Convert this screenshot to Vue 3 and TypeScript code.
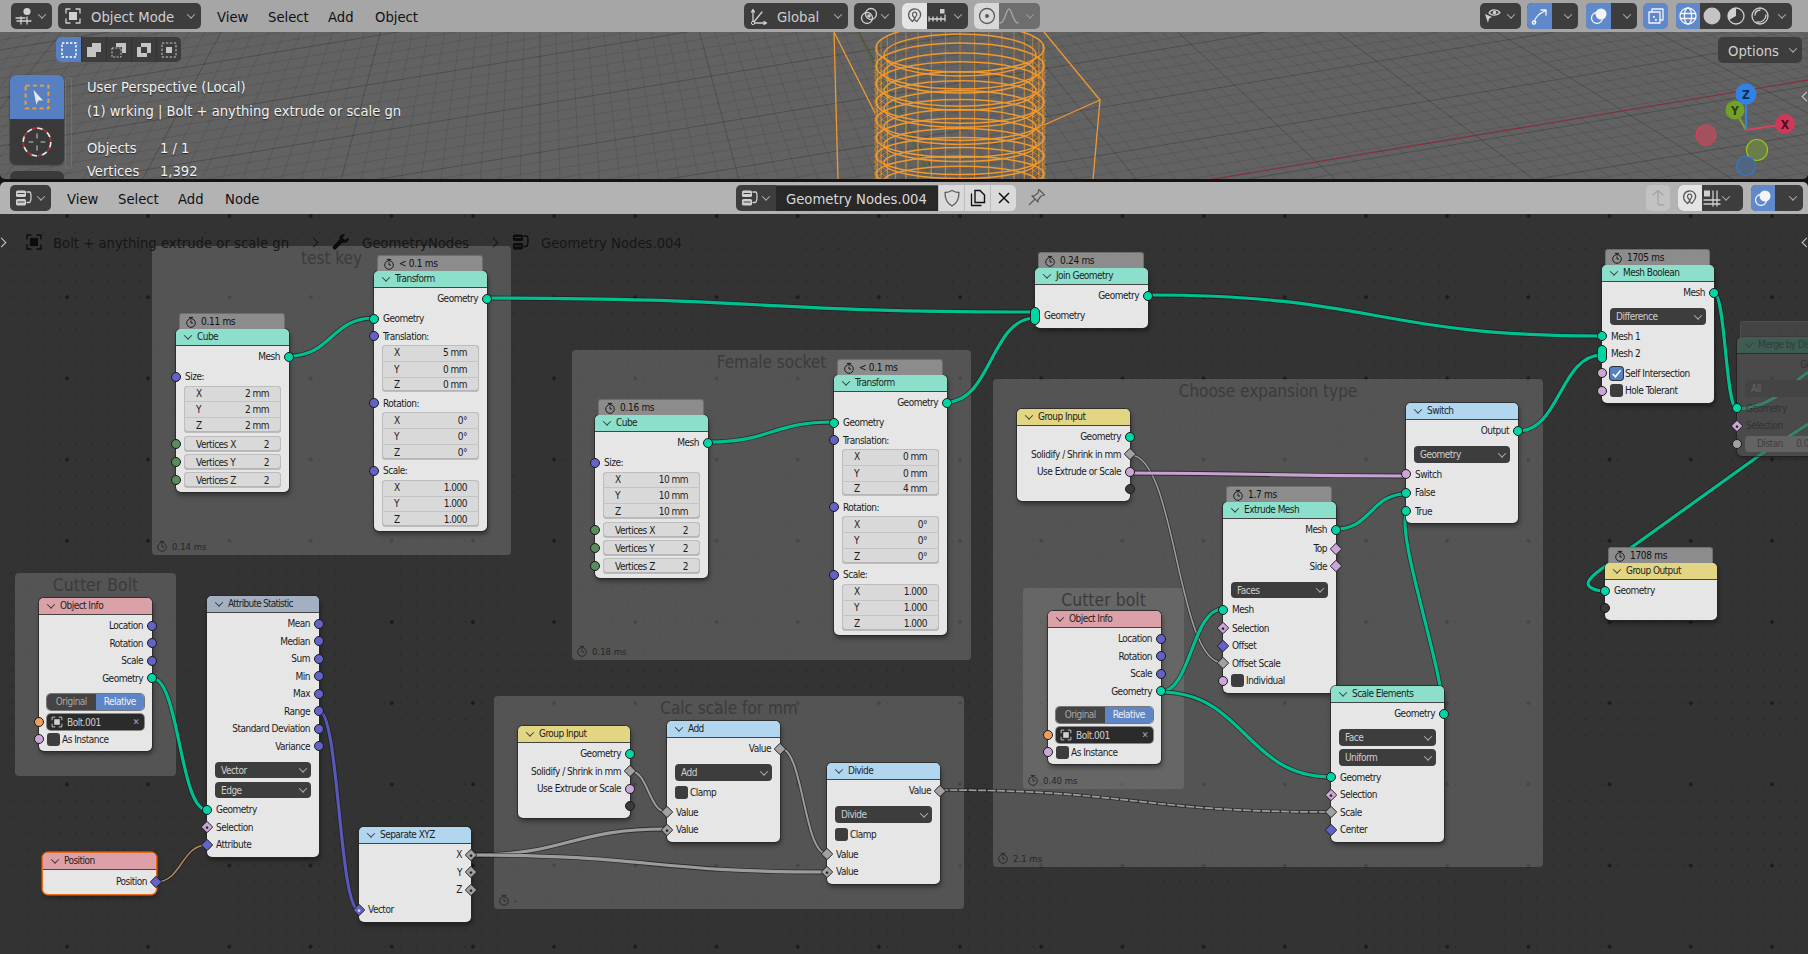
<template>
  <div class="app">
    <section class="area top">
      <header class="bar">
        <div class="btn ed"><svg class="ic" viewBox="0 0 20 20" v-html="icons.view3d"></svg><i class="chev"></i></div>
        <div class="btn mode"><svg class="ic" viewBox="0 0 20 20" v-html="icons.object"></svg><span>Object Mode</span><i class="chev"></i></div>
        <nav class="menu"><span>View</span><span>Select</span><span>Add</span><span>Object</span></nav>
        <div class="btn global"><svg class="ic" viewBox="0 0 20 20" v-html="icons.axes"></svg><span>Global</span><i class="chev"></i></div>
        <div class="btn pivot"><svg class="ic" viewBox="0 0 20 20" v-html="icons.rings"></svg><i class="chev"></i></div>
        <div class="btn snapg"><b class="lit"><svg class="ic dark" viewBox="0 0 20 20" v-html="icons.magnet"></svg></b><svg class="ic" viewBox="0 0 20 20" v-html="icons.increment"></svg><i class="chev"></i></div>
        <div class="btn prop"><b class="lit"><svg class="ic dark" viewBox="0 0 20 20" v-html="icons.target"></svg></b><svg class="ic" viewBox="0 0 20 20" v-html="icons.falloff"></svg><i class="chev"></i></div>
        <div class="btn eye"><svg class="ic" viewBox="0 0 20 20" v-html="icons.eye"></svg><i class="chev"></i></div>
        <div class="btn gz"><b class="blue"><svg class="ic" viewBox="0 0 20 20" v-html="icons.gizmo"></svg></b><i class="chev"></i></div>
        <div class="btn ov"><b class="blue"><svg class="ic" viewBox="0 0 20 20" v-html="icons.overlay"></svg></b><i class="chev"></i></div>
        <div class="btn xr"><b class="blue"><svg class="ic" viewBox="0 0 20 20" v-html="icons.xray"></svg></b></div>
        <div class="btn sh">
          <b class="blue"><svg class="ic" viewBox="0 0 20 20" v-html="icons.wire"></svg></b>
          <b><svg class="ic" viewBox="0 0 20 20" v-html="icons.solid"></svg></b>
          <b><svg class="ic" viewBox="0 0 20 20" v-html="icons.matcap"></svg></b>
          <b><svg class="ic" viewBox="0 0 20 20" v-html="icons.render"></svg></b>
          <i class="chev"></i>
        </div>
      </header>
      <div class="viewport">
        <svg class="scene" viewBox="0 32 1808 148">
          <path :d="grid.minor" class="gmin" />
          <path :d="grid.major" class="gmaj" />
          <path d="M1208 180L1808 80" class="xaxis" />
          <path d="M858 32L932 180" class="yaxis" />
          <g class="bolt">
            <path d="M834 32L838 180M834 32L875 113M1044 32L1100 100L1093 180M1044 125L1100 100" class="box-line" />
            <path v-for="(p, i) in bolt.mesh" :key="'m' + i" :d="p" class="mesh" />
            <path v-for="(p, i) in bolt.rings" :key="'r' + i" :d="p" class="ring" />
          </g>
          <g class="gizmo">
            <circle cx="1706" cy="135" r="10" fill="#a3525c" stroke="#d8405c" stroke-width="1.2" />
            <circle cx="1757" cy="150" r="10.5" fill="#6c7d4c" stroke="#8fcc14" stroke-width="1.2" />
            <circle cx="1746" cy="166" r="9.5" fill="#50657f" stroke="#3377cc" stroke-width="1.2" />
            <path d="M1746 130L1785 124" stroke="#d8405c" stroke-width="2" />
            <path d="M1746 130L1735 110" stroke="#7ea32c" stroke-width="2" />
            <path d="M1746 130V94" stroke="#2f83e0" stroke-width="2" />
            <circle cx="1735" cy="110" r="9.5" fill="#72a028" />
            <circle cx="1746" cy="94" r="10.5" fill="#2f83e6" />
            <circle cx="1785" cy="124" r="10" fill="#d0385a" />
            <text x="1735" y="114.5" fill="#2c3e0c">Y</text>
            <text x="1746" y="98.5" fill="#0d2c55">Z</text>
            <text x="1785" y="128.5" fill="#4a0d1c">X</text>
          </g>
        </svg>
        <div class="selmodes">
          <b v-for="(s, i) in selIcons" :key="i" :class="{ on: i === 0 }"><svg viewBox="0 0 20 20" v-html="s"></svg></b>
        </div>
        <div class="tools">
          <b class="on"><svg viewBox="0 0 30 30" v-html="icons.selectBox"></svg></b>
          <b><svg viewBox="0 0 30 30" v-html="icons.cursor"></svg></b>
        </div>
        <div class="tool3"></div>
        <div class="toolscroll"></div>
        <div class="stats">
          <p>User Perspective (Local)</p>
          <p>(1) wrking | Bolt + anything extrude or scale gn</p>
          <dl><dt>Objects</dt><dd>1 / 1</dd></dl>
          <dl><dt>Vertices</dt><dd>1,392</dd></dl>
        </div>
        <div class="options"><span>Options</span><i class="chev"></i></div>
        <div class="edgearrow a1"></div>
      </div>
    </section>

    <section class="area bottom">
      <header class="bar light">
        <div class="btn ed ed2"><svg class="ic" viewBox="0 0 20 20" v-html="icons.nodes"></svg><i class="chev"></i></div>
        <nav class="menu"><span>View</span><span>Select</span><span>Add</span><span>Node</span></nav>
        <div class="btn nt"><svg class="ic" viewBox="0 0 20 20" v-html="icons.nodes"></svg><i class="chev"></i></div>
        <div class="name">Geometry Nodes.004</div>
        <div class="lits">
          <b><svg class="ic dark" viewBox="0 0 20 20" v-html="icons.shield"></svg></b>
          <b><svg class="ic black" viewBox="0 0 20 20" v-html="icons.copy"></svg></b>
          <b><svg class="ic black" viewBox="0 0 20 20" v-html="icons.close"></svg></b>
        </div>
        <div class="pin"><svg class="ic dark" viewBox="0 0 20 20" v-html="icons.pin"></svg></div>
        <div class="up"><svg class="ic" viewBox="0 0 20 20" v-html="icons.up"></svg></div>
        <div class="btn snap2"><b class="lit"><svg class="ic dark" viewBox="0 0 20 20" v-html="icons.magnet"></svg></b><svg class="ic" viewBox="0 0 20 20" v-html="icons.snapgrid"></svg><i class="chev"></i></div>
        <div class="btn ov2"><b class="blue"><svg class="ic" viewBox="0 0 20 20" v-html="icons.overlay"></svg></b><i class="chev"></i></div>
      </header>
      <div class="canvas">
        <div
          v-for="f in frames"
          :key="f.label + f.x"
          class="frame"
          :class="f.big ? 'big' : ''"
          :style="{ left: f.x + 'px', top: f.y - 214 + 'px', width: f.w + 'px', height: f.h + 'px' }"
        >
          <div class="frame-label">{{ f.label }}</div>
          <div v-if="f.time" class="frame-time"><svg class="watch" viewBox="0 0 12 12" v-html="icons.watch"></svg>{{ f.time }}</div>
        </div>

        <svg class="wires" viewBox="0 214 1808 740">
          <g v-for="(l, i) in links" :key="i">
            <path :d="l.d" class="wire-bg" :stroke-width="l.t + 1.6" />
            <path :d="l.d" class="wire" :stroke="l.c" :stroke-width="l.t" :stroke-dasharray="l.dash" />
          </g>
        </svg>

        <div
          v-for="n in nodes"
          :key="n.title + n.x"
          class="node"
          :class="[n.muted ? 'muted' : '', n.active ? 'active' : '']"
          :style="{ left: n.x + 'px', top: n.y - 214 + 'px', width: n.w + 'px' }"
        >
          <div v-if="n.time" class="timer"><svg class="watch" viewBox="0 0 12 12" v-html="icons.watch"></svg>{{ n.time }}</div>
          <div class="head" :class="n.c"><i class="chev"></i>{{ n.title }}</div>
          <div class="body">
            <template v-for="(r, i) in n.rows" :key="i">
              <div v-if="r.k === 'vec'" class="vec">
                <div v-for="v in r.vals" :key="v[0]" class="vrow"><span>{{ v[0] }}</span><span>{{ v[1] }}</span></div>
              </div>
              <div v-else-if="r.k === 'dd'" class="dd"><div class="dd-in"><span>{{ r.label }}</span><i class="chev"></i></div></div>
              <div v-else-if="r.k === 'toggle'" class="toggle"><div class="tg"><span>Original</span><span class="on">Relative</span></div></div>
              <div v-else class="row" :class="r.k" :style="r.mt ? { marginTop: r.mt + 'px' } : undefined">
                <i v-if="r.s" class="sock" :class="sockClass(r)"></i>
                <template v-if="r.k === 'num'">
                  <div class="numbox"><span>{{ r.label }}</span><span>{{ r.val }}</span></div>
                </template>
                <template v-else-if="r.k === 'chk'">
                  <i class="box" :class="{ on: r.on }"><svg v-if="r.on" viewBox="0 0 12 12"><path d="M2.5 6.5L5 9L9.8 3" /></svg></i>{{ r.label }}
                </template>
                <template v-else-if="r.k === 'obj'">
                  <div class="objbox"><svg class="ic" viewBox="0 0 20 20" v-html="icons.object"></svg><span>{{ r.label }}</span><em>✕</em></div>
                </template>
                <template v-else>{{ r.label }}</template>
              </div>
            </template>
          </div>
        </div>

        <div class="crumbs">
          <svg class="ic k" viewBox="0 0 20 20" v-html="icons.object"></svg>
          <span class="c1">Bolt + anything extrude or scale gn</span>
          <i class="sep"></i>
          <svg class="ic k" viewBox="0 0 20 20" v-html="icons.wrench"></svg>
          <span class="c2">GeometryNodes</span>
          <i class="sep"></i>
          <svg class="ic k" viewBox="0 0 20 20" v-html="icons.nodesK"></svg>
          <span class="c3">Geometry Nodes.004</span>
        </div>
        <div class="edgearrow left"></div>
        <div class="edgearrow a2"></div>
      </div>
    </section>
  </div>
</template>

<script setup lang="ts">
type Row = {
  k: 'out' | 'in' | 'vec' | 'num' | 'dd' | 'chk' | 'toggle' | 'obj'
  label?: string
  s?: string
  mt?: number
  val?: string
  on?: boolean
  vals?: string[][]
}

interface NodeDef {
  x: number
  y: number
  w: number
  title: string
  c: string
  time?: string
  muted?: boolean
  active?: boolean
  rows: Row[]
}

const out = (label: string, s = 'geo', mt = 0): Row => ({ k: 'out', label, s, mt })
const inp = (label: string, s = 'geo', mt = 0): Row => ({ k: 'in', label, s, mt })
const num = (label: string, val: string, s = 'int'): Row => ({ k: 'num', label, val, s })
const dd = (label: string): Row => ({ k: 'dd', label })
const chk = (label: string, s = '', on = false, mt = 0): Row => ({ k: 'chk', label, s, on, mt })
const vec = (a: string, b: string, c: string): Row => ({ k: 'vec', vals: [['X', a], ['Y', b], ['Z', c]] })

const sockClass = (r: Row) => {
  const [c, shape] = (r.s || '').split(':')
  return ['s-' + c, 'sh-' + (shape || 'circle'), r.k === 'out' ? 'right' : 'left']
}

const cube = (x: number, y: number, size: string, time: string): NodeDef => ({
  x, y, w: 113, title: 'Cube', c: 'geo', time,
  rows: [
    out('Mesh'), inp('Size:', 'vec', 2.5), vec(size, size, size),
    num('Vertices X', '2'), num('Vertices Y', '2'), num('Vertices Z', '2'),
  ],
})

const transform = (x: number, y: number, a: string, b: string, c: string): NodeDef => ({
  x, y, w: 113, title: 'Transform', c: 'geo', time: '< 0.1 ms',
  rows: [
    out('Geometry'), inp('Geometry', 'geo', 2.5),
    inp('Translation:', 'vec'), vec(a, b, c),
    inp('Rotation:', 'vec'), vec('0°', '0°', '0°'),
    inp('Scale:', 'vec'), vec('1.000', '1.000', '1.000'),
  ],
})

const objectInfo = (x: number, y: number): NodeDef => ({
  x, y, w: 113, title: 'Object Info', c: 'input',
  rows: [
    out('Location', 'vec'), out('Rotation', 'vec'), out('Scale', 'vec'), out('Geometry'),
    { k: 'toggle' }, { k: 'obj', label: 'Bolt.001', s: 'obj' }, chk('As Instance', 'bool'),
  ],
})

const groupInput = (x: number, y: number, w: number): NodeDef => ({
  x, y, w, title: 'Group Input', c: 'group',
  rows: [out('Geometry'), out('Solidify / Shrink in mm', 'val:dia'), out('Use Extrude or Scale', 'bool'), out('', 'none')],
})

const nodes: NodeDef[] = [
  cube(176, 329, '2 mm', '0.11 ms'),
  transform(374, 271, '5 mm', '0 mm', '0 mm'),
  cube(595, 415, '10 mm', '0.16 ms'),
  transform(834, 375, '0 mm', '0 mm', '4 mm'),
  {
    x: 1035, y: 268, w: 113, title: 'Join Geometry', c: 'geo', time: '0.24 ms',
    rows: [out('Geometry'), inp('Geometry', 'geo:pill', 2.5)],
  },
  {
    x: 1602, y: 265, w: 112, title: 'Mesh Boolean', c: 'geo', time: '1705 ms',
    rows: [out('Mesh'), dd('Difference'), inp('Mesh 1'), inp('Mesh 2', 'geo:pill'), chk('Self Intersection', 'bool', true, 2), chk('Hole Tolerant', 'bool')],
  },
  {
    x: 1737, y: 337, w: 113, title: 'Merge by Distance', c: 'geo', time: '-', muted: true,
    rows: [out('Geometry'), dd('All'), inp('Geometry'), inp('Selection', 'bool:dot'), num('Distan', '0.001 m', 'val')],
  },
  {
    x: 1605, y: 563, w: 112, title: 'Group Output', c: 'group', time: '1708 ms',
    rows: [inp('Geometry'), inp('', 'none')],
  },
  groupInput(1017, 409, 113),
  {
    x: 1406, y: 403, w: 112, title: 'Switch', c: 'conv',
    rows: [out('Output'), dd('Geometry'), inp('Switch', 'bool'), inp('False', 'geo', 1), inp('True', 'geo', 1)],
  },
  {
    x: 1223, y: 502, w: 113, title: 'Extrude Mesh', c: 'geo', time: '1.7 ms',
    rows: [
      out('Mesh'), out('Top', 'bool:dia', 1.5), out('Side', 'bool:dia'), dd('Faces'),
      inp('Mesh'), inp('Selection', 'bool:dot', 1), inp('Offset', 'vec:dia'), inp('Offset Scale', 'val:dia'), chk('Individual', 'bool'),
    ],
  },
  {
    x: 1331, y: 686, w: 113, title: 'Scale Elements', c: 'geo',
    rows: [out('Geometry'), dd('Face'), dd('Uniform'), inp('Geometry'), inp('Selection', 'bool:dot'), inp('Scale', 'val:dia'), inp('Center', 'vec:dia')],
  },
  objectInfo(1048, 611),
  objectInfo(39, 598),
  {
    x: 207, y: 596, w: 112, title: 'Attribute Statistic', c: 'attr',
    rows: [
      out('Mean', 'vec'), out('Median', 'vec'), out('Sum', 'vec'), out('Min', 'vec'), out('Max', 'vec'), out('Range', 'vec'),
      out('Standard Deviation', 'vec'), out('Variance', 'vec'), dd('Vector'), dd('Edge'),
      inp('Geometry'), inp('Selection', 'bool:dot'), inp('Attribute', 'vec:dia'),
    ],
  },
  {
    x: 43, y: 853, w: 113, title: 'Position', c: 'input', active: true,
    rows: [out('Position', 'vec:dia', 1)],
  },
  {
    x: 359, y: 827, w: 112, title: 'Separate XYZ', c: 'conv',
    rows: [out('X', 'val:dot'), out('Y', 'val:dot'), out('Z', 'val:dot'), inp('Vector', 'vec:dot', 2.5)],
  },
  groupInput(518, 726, 112),
  {
    x: 667, y: 721, w: 113, title: 'Add', c: 'conv',
    rows: [out('Value', 'val:dia'), dd('Add'), chk('Clamp'), inp('Value', 'val:dia', 2.5), inp('Value', 'val:dot')],
  },
  {
    x: 827, y: 763, w: 113, title: 'Divide', c: 'conv',
    rows: [out('Value', 'val:dia'), dd('Divide'), chk('Clamp'), inp('Value', 'val:dia', 2.5), inp('Value', 'val:dot')],
  },
]

const frames = [
  { x: 152, y: 246, w: 359, h: 309, label: 'test key', time: '0.14 ms' },
  { x: 572, y: 350, w: 399, h: 310, label: 'Female socket', time: '0.18 ms' },
  { x: 15, y: 573, w: 161, h: 203, label: 'Cutter Bolt', time: '', big: true },
  { x: 494, y: 696, w: 470, h: 213, label: 'Calc scale for mm', time: '-' },
  { x: 993, y: 379, w: 550, h: 488, label: 'Choose expansion type', time: '2.1 ms' },
  { x: 1023, y: 588, w: 161, h: 201, label: 'Cutter bolt', time: '0.40 ms', big: true },
]

const bez = (x1: number, y1: number, x2: number, y2: number) => {
  const d = Math.abs(x2 - x1) * 0.5
  return `M${x1} ${y1}C${x1 + d} ${y1} ${x2 - d} ${y2} ${x2} ${y2}`
}

const TEAL = '#00c090'
const VAL = '#9c9c9c'
const W = 3.2
const links: { d: string; c: string; t: number; dash?: string }[] = [
  { d: bez(1130, 455, 1223, 663), c: VAL, t: 1.6 },
  { d: bez(289, 356, 374, 318), c: TEAL, t: W },
  { d: bez(487, 298, 1035, 312), c: TEAL, t: W },
  { d: bez(709, 442, 834, 422), c: TEAL, t: W },
  { d: bez(947, 402, 1035, 318), c: TEAL, t: W },
  { d: bez(1149, 295, 1602, 336), c: TEAL, t: W },
  { d: bez(1518, 431, 1602, 355), c: TEAL, t: W },
  { d: bez(1714, 293, 1737, 409), c: TEAL, t: W },
  { d: 'M1808 424L1760 455L1600 570C1588 579 1586 584 1590 587C1594 590 1600 591 1605 591', c: TEAL, t: W },
  { d: 'M1737 409C1770 409 1790 385 1808 372', c: TEAL, t: W },
  { d: bez(152, 678, 207, 810), c: TEAL, t: W },
  { d: bez(1160, 692, 1223, 609), c: TEAL, t: W },
  { d: bez(1160, 692, 1331, 777), c: TEAL, t: W },
  { d: bez(1336, 529, 1406, 494), c: TEAL, t: W },
  { d: 'M1406 513C1398 540 1440 660 1444 713', c: TEAL, t: W },
  { d: bez(319, 711, 359, 910), c: '#5858b8', t: W },
  { d: bez(156, 882, 207, 845), c: '#b58a5c', t: 1.5 },
  { d: bez(1130, 473, 1406, 476), c: '#c8a2d2', t: W },
  { d: bez(471, 855, 667, 829), c: VAL, t: W },
  { d: bez(471, 855, 827, 872), c: VAL, t: W },
  { d: bez(630, 771, 667, 812), c: VAL, t: 2 },
  { d: bez(780, 748, 827, 854), c: VAL, t: 2 },
  { d: bez(940, 790, 1331, 812), c: VAL, t: 1.7, dash: '8 1.5' },
]

// viewport floor grid, radial lines come from one vanishing point
const buildGrid = () => {
  let minor = ''
  let major = ''
  const vx = 540
  const vy = -566
  for (let i = -60; i <= 120; i++) {
    const k = (i * 16) / 600
    const seg = `M${vx + k * (32 - vy)} 32L${vx + k * (180 - vy)} 180`
    if (i % 10 === 0) major += seg
    else minor += seg
  }
  for (let i = -10; i <= 60; i++) {
    const y0 = i * 9.6 + 2
    const seg = `M0 ${y0}L1808 ${y0 - 300}`
    if (i % 5 === 0) major += seg
    else minor += seg
  }
  return { minor, major }
}
const grid = buildGrid()

// threaded rod: stacked rings, short mesh lines between them, dense at the sides
const buildBolt = () => {
  const rings: string[] = []
  const mesh: string[] = []
  for (let i = 0; i < 8; i++) {
    const cy = 48 + i * 18
    const ry = 24 - i * 0.9
    rings.push(`M876 ${cy}A84 ${ry} 0 1 0 1044 ${cy}A84 ${ry} 0 1 0 876 ${cy}`)
    rings.push(`M884 ${cy + 7}A76 ${ry - 3} 0 1 0 1036 ${cy + 7}A76 ${ry - 3} 0 1 0 884 ${cy + 7}`)
  }
  for (let a = 0; a < 36; a++) {
    const t = (a / 36) * Math.PI * 2
    const x = 960 + 84 * Math.cos(t)
    const y = 48 + 24 * Math.sin(t)
    mesh.push(`M${x.toFixed(1)} ${y.toFixed(1)}V200`)
  }
  for (let i = 0; i < 24; i++) {
    const y = 60 + i * 6
    mesh.push(`M874 ${y}l16 11M874 ${y + 11}l16 -11M1046 ${y}l-16 11M1046 ${y + 11}l-16 -11`)
  }
  return { rings, mesh }
}
const bolt = buildBolt()

const line = 'fill="none" stroke="currentColor" stroke-width="1.3" stroke-linecap="round" stroke-linejoin="round"'
const icons: Record<string, string> = {
  view3d: `<g ${line}><path d="M2 15H16M6 11V18M12 11V18M1 12L10 12"/></g><circle cx="12" cy="5.5" r="3.6" fill="currentColor"/>`,
  object: `<rect x="6" y="6" width="8" height="8" fill="currentColor"/><path d="M7 3H3V7M13 3H17V7M7 17H3V13M13 17H17V13" ${line}/>`,
  axes: `<path d="M4 17V4M4 17H17M4 17L13 6M2.5 6L4 3.5L5.5 6M15 15.5L17.5 17L15 18.5" ${line}/><circle cx="4" cy="17" r="1.6" fill="#3d3d3d" stroke="currentColor"/>`,
  rings: `<g ${line}><circle cx="8" cy="12" r="5.5"/><circle cx="12" cy="8" r="5.5"/></g><circle cx="10" cy="10" r="1.8" fill="currentColor"/>`,
  magnet: `<path d="M5 13C2 9 4 3.5 9 3C14 2.5 17 7 15 11L12 15.5L9 13.5L11.5 9.5C12.5 7.5 11 6 9.5 6.2C7.5 6.5 7 8.5 8 10L10 12.5L7.5 15.5Z" ${line}/>`,
  increment: `<path d="M2 11V15M2 13H18M6 11V15M10 11V15M14 11V15M18 9V15" ${line}/><rect x="13" y="3" width="4.5" height="4.5" fill="currentColor"/>`,
  target: `<circle cx="10" cy="10" r="7.5" ${line}/><circle cx="10" cy="10" r="2" fill="currentColor"/>`,
  falloff: `<path d="M1 17C6 17 7 3 10 3C13 3 14 17 19 17" ${line}/>`,
  eye: `<path d="M6 7C8 3 14 3 17 6.5C14 10 9 10 6 7Z" ${line}/><circle cx="11.5" cy="6.5" r="1.8" fill="currentColor"/><path d="M2 8L9 11L6 12.5L5 17Z" fill="currentColor"/>`,
  gizmo: `<path d="M4 16C6 10 10 7 15 5M11 4H16V9" ${line}/><circle cx="4" cy="16.5" r="1.7" ${line}/>`,
  overlay: `<circle cx="8" cy="12" r="5.5" ${line}/><circle cx="12" cy="8" r="5.5" fill="currentColor"/>`,
  xray: `<rect x="3" y="6" width="11" height="11" ${line}/><path d="M6 6V3H17V14H14" ${line}/><rect x="7" y="10" width="1.8" height="1.8" fill="currentColor"/><rect x="9" y="13" width="1.8" height="1.8" fill="currentColor"/>`,
  wire: `<circle cx="10" cy="10" r="8" ${line}/><ellipse cx="10" cy="10" rx="3.6" ry="8" ${line}/><path d="M2.4 7.5H17.6M2.4 12.5H17.6" ${line}/>`,
  solid: `<circle cx="10" cy="10" r="8.5" fill="#c4c4c4"/>`,
  matcap: `<circle cx="10" cy="10" r="8" ${line}/><path d="M10 2A8 8 0 0 0 3 14L10 10Z" fill="currentColor"/>`,
  render: `<circle cx="10" cy="10" r="8" ${line}/><path d="M5 9C5 6 7 4.5 10 4M7 16C12 17 16 13 16 9" ${line}/>`,
  nodes: `<rect x="2" y="2.5" width="10" height="6.5" rx="1.6" fill="currentColor"/><rect x="2" y="11" width="10" height="6.5" rx="1.6" fill="currentColor"/><path d="M3.5 5.5H10.5M3.5 14H10.5" stroke="#3d3d3d" stroke-width="1"/><path d="M13 4H15.5C17.5 4 17.5 13 15.5 14.5H13" ${line}/>`,
  nodesK: `<rect x="2" y="2.5" width="10" height="6.5" rx="1.6" fill="currentColor"/><rect x="2" y="11" width="10" height="6.5" rx="1.6" fill="currentColor"/><path d="M3.5 5.5H10.5M3.5 14H10.5" stroke="#333" stroke-width="1"/><path d="M13 4H15.5C17.5 4 17.5 13 15.5 14.5H13" ${line}/>`,
  wrench: `<path d="M17.5 5.5L14 8L11.5 6L14 2.5C11 1.5 8 3.5 8.5 7.5L1.8 14.5C0.8 16 3 18.5 4.8 17.2L11.5 10.5C15.5 11.5 18.5 9 17.5 5.5Z" fill="currentColor"/>`,
  shield: `<path d="M10 2.5C7.5 4 5.5 4.5 3 4.5C3 10 4 15 10 18C16 15 17 10 17 4.5C14.5 4.5 12.5 4 10 2.5Z" ${line}/>`,
  copy: `<path d="M3.5 6V17.5H13" ${line}/><path d="M7 2.5H12L16.5 7V14.5H7Z" fill="none" stroke="currentColor" stroke-width="1.4"/>`,
  close: `<path d="M5 5L15 15M15 5L5 15" fill="none" stroke="currentColor" stroke-width="1.5"/>`,
  pin: `<path d="M12 2.5L17.5 8L14 9L11 13L11 15L5 9L7 9L11 6Z" ${line}/><path d="M7.5 12.5L2.5 17.5" ${line}/>`,
  up: `<path d="M5 7L10 2.5L15 7M10 3V15C10 16.5 11 17 13 17H16" ${line}/>`,
  snapgrid: `<rect x="2" y="2.5" width="6" height="6" fill="currentColor"/><path d="M2 12H18M2 16H18M11 3V18M15 3V18" ${line}/>`,
  watch: `<circle cx="6" cy="7" r="4.3" fill="none" stroke="currentColor" stroke-width=".9"/><path d="M3.8 1.4H8.2M6 1.4V3M6 4.4V7H8" fill="none" stroke="currentColor" stroke-width=".9"/>`,
  selectBox: `<rect x="5.5" y="5.5" width="19" height="19" fill="none" stroke="#f0a030" stroke-width="1.6" stroke-dasharray="3.4 2.6"/><path d="M12 9L20 18H16L14.5 21.5Z" fill="#e8e8e8"/>`,
  cursor: `<circle cx="15" cy="15" r="11.5" fill="none" stroke="#e8e8e8" stroke-width="1.4" stroke-dasharray="5 4"/><circle cx="15" cy="15" r="11.5" fill="none" stroke="#b03030" stroke-width="1.4" stroke-dasharray="4 5" stroke-dashoffset="4.5"/><path d="M15 8V12M15 18V22M8 15H12M18 15H22" stroke="#999" stroke-width="1.3"/>`,
}

const selIcons = [
  `<rect x="3" y="3" width="14" height="14" fill="#5680c2" stroke="#fff" stroke-width="1.4" stroke-dasharray="2.4 1.6"/>`,
  `<path d="M3 7H8V3H17V12H12V17H3Z" fill="#c4c4c4"/>`,
  `<rect x="3" y="8" width="9" height="9" fill="none" stroke="#c4c4c4" stroke-dasharray="2 1.4"/><path d="M7 3H17V13H13V7H7Z" fill="#c4c4c4"/>`,
  `<path d="M3 7H7V3H17V13H13V17H3ZM7 7V13H13V7Z" fill="#c4c4c4" fill-rule="evenodd"/>`,
  `<rect x="3" y="3" width="14" height="14" fill="none" stroke="#c4c4c4" stroke-dasharray="2.4 1.6"/><rect x="7" y="7" width="6" height="6" fill="#c4c4c4"/>`,
]
</script>

<style>
html, body { margin: 0; background: #111; }
</style>

<style scoped>
.app {
  width: 1808px;
  height: 954px;
  overflow: hidden;
  display: flex;
  flex-direction: column;
  gap: 3px;
  background: #141414;
  font-family: "DejaVu Sans", "Liberation Sans", sans-serif;
  font-stretch: condensed;
  color: #111;
}
.area { display: flex; flex-direction: column; overflow: hidden; }
.top { height: 179px; border-radius: 0 0 5px 5px; }
.bottom { height: 772px; border-radius: 5px 5px 0 0; }

.bar {
  height: 32px;
  flex: none;
  display: flex;
  align-items: center;
  padding-left: 11px;
  background: #a6a6a6;
  font-size: 14.7px;
}
.bar.light { background: #b3b3b3; padding-left: 10px; }
.btn {
  height: 26px;
  flex: none;
  display: flex;
  align-items: center;
  box-sizing: border-box;
  background: #3d3d3d;
  color: #cfcfcf;
  border-radius: 5px;
  overflow: hidden;
  position: relative;
}
.btn b { height: 100%; flex: none; display: flex; align-items: center; justify-content: center; font-weight: 400; width: 25px; }
.btn .blue { background: #6089cc; color: #f4f4f4; }
.btn .blue .ic { color: #f4f4f4; }
.btn .lit { background: #e4e4e4; }
.ic { width: 20px; height: 20px; flex: none; color: #d0d0d0; }
.ic.dark { color: #5c5c5c; }
.ic.black { color: #111; }
.ic.k { color: #0c0c0c; }
.chev {
  display: inline-block;
  flex: none;
  width: 5px;
  height: 5px;
  border-right: 1px solid currentColor;
  border-bottom: 1px solid currentColor;
  transform: rotate(45deg) translate(-1px, -1px);
  opacity: .8;
}
.btn > .chev { margin-left: auto; margin-right: 7px; }

.ed { width: 41px; padding-left: 4px; }
.mode { width: 143px; margin-left: 6px; padding-left: 5px; }
.mode span, .global span { margin-left: 8px; }
.menu { display: flex; flex: none; margin-left: 16px; width: 203px; }
.menu span:nth-child(1) { width: 51px; }
.menu span:nth-child(2) { width: 60px; }
.menu span:nth-child(3) { width: 47px; }
.global { width: 104px; margin-left: 324px; padding-left: 5px; }
.pivot { width: 41px; margin-left: 6px; padding-left: 5px; }
.snapg { width: 66px; margin-left: 7px; }
.prop { width: 66px; margin-left: 6px; background: #6e6e6e; color: #aaa; }
.prop .ic { color: #a8a8a8; }
.prop .lit .ic { color: #5c5c5c; }
.prop .lit { background: #d8d8d8; }
.eye { width: 41px; margin-left: 440px; padding-left: 3px; }
.gz { width: 51px; margin-left: 6px; }
.ov { width: 51px; margin-left: 8px; }
.xr { width: 25px; margin-left: 6px; }
.sh { width: 116px; margin-left: 8px; }
.sh b { width: 24px; }

.ed2 { padding-left: 4px; }
.nt { width: 40px; margin-left: 466px; padding-left: 4px; border-radius: 5px 0 0 5px; }
.name {
  width: 162px;
  height: 26px;
  flex: none;
  box-sizing: border-box;
  background: #282828;
  color: #d8d8d8;
  font-size: 14.7px;
  line-height: 25px;
  padding-left: 10px;
  border-top: 1px solid #555;
}
.lits { display: flex; flex: none; height: 26px; background: #dadada; border-radius: 0 5px 5px 0; }
.lits b { width: 26px; display: flex; align-items: center; justify-content: center; border-left: 1px solid #bcbcbc; box-sizing: border-box; }
.pin { margin-left: 11px; width: 33px; flex: none; }
.up {
  margin-left: 586px;
  width: 24px;
  height: 26px;
  flex: none;
  background: #c2c2c2;
  border-radius: 5px;
  display: flex;
  align-items: center;
  justify-content: center;
}
.up .ic { color: #a5a5a5; }
.snap2 { width: 65px; margin-left: 8px; }
.snap2 b { width: 24px; }
.snap2 > .chev { margin-right: 5px; margin-left: 1px; }
.ov2 { width: 52px; margin-left: 8px; }
.ov2 b { width: 24px; }

.viewport { flex: 1; position: relative; overflow: hidden; background: #626262; }
.scene { position: absolute; left: 0; top: 0; width: 1808px; height: 148px; }
.gmin { stroke: rgba(45, 45, 45, .16); stroke-width: 1; fill: none; }
.gmaj { stroke: rgba(40, 40, 40, .34); stroke-width: 1; fill: none; }
.xaxis { stroke: #80333f; stroke-width: 1.3; fill: none; }
.yaxis { stroke: #4c6628; stroke-width: 1.3; fill: none; }
.bolt path { fill: none; stroke: #f0992e; }
.bolt .box-line { stroke-width: 1.3; }
.bolt .ring { stroke-width: 1.5; }
.bolt .mesh { stroke-width: .7; opacity: .75; }
.gizmo text { font-size: 12px; font-weight: 700; text-anchor: middle; }

.selmodes {
  position: absolute;
  left: 56px;
  top: 5px;
  display: flex;
  background: #3d3d3d;
  border-radius: 5px;
  overflow: hidden;
}
.selmodes b { width: 25px; height: 25px; display: flex; align-items: center; justify-content: center; border-left: 1px solid #333; box-sizing: border-box; }
.selmodes b.on { background: #5680c2; border: 0; }
.selmodes svg { width: 20px; height: 20px; }
.tools {
  position: absolute;
  left: 10px;
  top: 43px;
  width: 54px;
  border-radius: 6px;
  overflow: hidden;
  background: #3a3a3a;
  box-shadow: 0 1px 2px rgba(0, 0, 0, .5);
}
.tools b { display: flex; height: 45px; align-items: center; justify-content: center; }
.tools b.on { background: #5680c2; height: 44px; }
.tools svg { width: 36px; height: 36px; }
.tool3 { position: absolute; left: 10px; top: 139px; width: 54px; height: 30px; background: #3a3a3a; border-radius: 6px; }
.toolscroll { position: absolute; left: 65px; top: 45px; width: 7px; height: 92px; border: 1px solid rgba(130, 130, 130, .45); border-radius: 4px; box-sizing: border-box; }
.stats {
  position: absolute;
  left: 87px;
  top: 44px;
  color: #f2f2f2;
  font-size: 14.6px;
  text-shadow: 0 1px 1px rgba(0, 0, 0, .6);
}
.stats p { margin: 0; height: 24px; line-height: 22px; }
.stats p + p { margin-bottom: 13px; }
.stats dl { margin: 0; display: flex; height: 23px; line-height: 22px; }
.stats dt { width: 73px; }
.stats dd { margin: 0; }
.options {
  position: absolute;
  left: 1718px;
  top: 5px;
  width: 84px;
  height: 26px;
  box-sizing: border-box;
  padding: 0 6px 0 10px;
  background: #3d3d3d;
  border-radius: 5px;
  color: #cfcfcf;
  font-size: 14.7px;
  display: flex;
  align-items: center;
  justify-content: space-between;
}
.edgearrow {
  position: absolute;
  width: 7px;
  height: 7px;
  box-sizing: border-box;
  border-left: 1.5px solid #ccc;
  border-bottom: 1.5px solid #ccc;
  transform: rotate(45deg);
}
.edgearrow.a1 { left: 1803px; top: 61px; }
.edgearrow.a2 { left: 1803px; top: 25px; }
.edgearrow.left { left: -2px; top: 25px; transform: rotate(225deg); }

.canvas {
  flex: 1;
  position: relative;
  overflow: hidden;
  background-color: #333;
  background-image:
    radial-gradient(circle, #1c1c1c 1.7px, transparent 2.1px),
    radial-gradient(circle, #262626 .7px, transparent 1.1px);
  background-size: 81.2px 81.2px, 16.24px 16.24px;
  background-position: 26.4px -38.6px, 2.7px -6px;
}
.frame {
  position: absolute;
  background: rgba(125, 125, 125, .45);
  border-radius: 4px;
  color: #3b3b3b;
}
.frame-label { text-align: center; font-size: 17px; line-height: 24px; white-space: nowrap; }
.frame.big .frame-label { font-size: 17.5px; }
.frame-time {
  position: absolute;
  left: 4px;
  bottom: 3px;
  display: flex;
  align-items: center;
  gap: 4px;
  font-size: 9.5px;
  color: #262626;
}
.watch { width: 12px; height: 12px; flex: none; }

.wires { position: absolute; left: 0; top: 0; width: 1808px; height: 740px; pointer-events: none; }
.wire, .wire-bg { fill: none; }
.wire-bg { stroke: rgba(20, 20, 20, .6); }

.node {
  position: absolute;
  border-radius: 5px;
  background: #e6e6e6;
  box-shadow: 0 0 0 1px rgba(40, 40, 40, .8), 1px 3px 5px rgba(0, 0, 0, .45);
  font-size: 10px;
  letter-spacing: -.5px;
  color: #1c1c1c;
}
.node.active { box-shadow: 0 0 0 1.5px #ea6a1c, 1px 3px 5px rgba(0, 0, 0, .45); }
.timer {
  position: absolute;
  left: 3px;
  right: 4px;
  bottom: 100%;
  height: 16px;
  box-sizing: border-box;
  padding-left: 5px;
  display: flex;
  align-items: center;
  gap: 4px;
  background: #8c8c8c;
  border: 1px solid #6e6e6e;
  border-bottom: 0;
  border-radius: 3px 3px 0 0;
  font-size: 10px;
  letter-spacing: -.3px;
  color: #111;
}
.head {
  height: 16.5px;
  box-sizing: border-box;
  display: flex;
  align-items: center;
  padding-left: 9px;
  gap: 6px;
  border-radius: 5px 5px 0 0;
  border-bottom: 1px solid #444;
  font-size: 10px;
  letter-spacing: -.55px;
  color: #1e1e1e;
}
.head .chev { transform: rotate(45deg) translate(-1px, -1px); }
.head.geo { background: #8ce0cb; }
.head.input { background: #dba0a8; }
.head.group { background: #e2d685; }
.head.conv { background: #b1d6f0; }
.head.attr { background: #a3b0c2; letter-spacing: -.75px; }
.body { padding: 2.25px 0 3.25px; display: flex; flex-direction: column; }
.row { height: 17.5px; flex: none; position: relative; display: flex; align-items: center; box-sizing: border-box; white-space: nowrap; }
.row.out { justify-content: flex-end; padding-right: 9px; }
.row.in { padding-left: 9px; }
.row.chk { padding-left: 8px; }
.row.num { height: 18px; padding: 0 8px; }
.row.obj { height: 20px; padding: 0 8px; margin-bottom: -1.75px; }

.sock {
  position: absolute;
  top: 50%;
  box-sizing: border-box;
  width: 10px;
  height: 10px;
  margin-top: -5px;
  border: 1px solid #1a1a1a;
  border-radius: 50%;
}
.sock.left { left: -5px; }
.sock.right { right: -5px; }
.sock.sh-dia, .sock.sh-dot { border-radius: 1px; transform: rotate(45deg) scale(.9); }
.sock.sh-dot::after {
  content: '';
  position: absolute;
  left: 2.5px;
  top: 2.5px;
  width: 3px;
  height: 3px;
  border-radius: 50%;
  background: #222;
}
.sock.s-vec.sh-dot::after { background: #ddd; }
.sock.sh-pill { height: 18px; margin-top: -9px; border-radius: 5px; }
.sock.s-geo { background: #00d6a3; }
.sock.s-vec { background: #6363c7; }
.sock.s-bool { background: #cca6d6; }
.sock.s-int { background: #598c5c; }
.sock.s-obj { background: #ed9e5c; }
.sock.s-val { background: #a1a1a1; }
.sock.s-none { background: #3a3a3a; }

.vec {
  margin: .4px 8px 2.4px;
  border-radius: 4px;
  background: #d9d9d9;
  box-shadow: inset 0 0 0 1px #bdbdbd, inset 0 -1px 0 1px #b5b5b5;
  flex: none;
}
.vec:last-child { margin-bottom: .9px; }
.vrow { height: 15.7px; display: flex; justify-content: space-between; align-items: center; padding: 0 12px 0 12px; border-top: 1px solid #c4c4c4; box-sizing: border-box; }
.vrow:first-child { border-top: 0; }
.numbox {
  flex: 1;
  height: 16px;
  box-sizing: border-box;
  border-radius: 4px;
  background: #d9d9d9;
  box-shadow: inset 0 0 0 1px #bdbdbd, inset 0 -1px 0 1px #b5b5b5;
  padding: 0 12px;
  display: flex;
  justify-content: space-between;
  align-items: center;
  white-space: nowrap;
  overflow: visible;
}
.dd { height: 20px; margin: 5.25px 8px 1px; display: flex; align-items: center; flex: none; }
.dd + .dd { margin-top: -1px; }
.dd-in {
  flex: 1;
  height: 16.5px;
  box-sizing: border-box;
  border-radius: 4px;
  background: #3d3d3d;
  color: #cfcfcf;
  padding: 0 5px 0 6px;
  display: flex;
  justify-content: space-between;
  align-items: center;
}
.toggle { height: 20px; margin: 5.25px 8px 0; display: flex; align-items: center; flex: none; }
.tg { flex: 1; height: 16px; border-radius: 4px; overflow: hidden; display: flex; box-shadow: 0 0 0 1px #777; }
.tg span { flex: 1; background: #444; color: #a8a8a8; text-align: center; line-height: 16px; }
.tg span.on { background: #5e86c6; color: #f0f0f0; }
.objbox {
  flex: 1;
  height: 16px;
  box-sizing: border-box;
  border-radius: 4px;
  background: #2b2b2b;
  box-shadow: 0 0 0 1px #888;
  color: #cfcfcf;
  display: flex;
  align-items: center;
  padding: 0 5px 0 3px;
  gap: 3px;
}
.objbox .ic { width: 14px; height: 14px; }
.objbox em { margin-left: auto; font-style: normal; font-size: 9px; color: #aaa; }
.box {
  width: 13px;
  height: 13px;
  flex: none;
  box-sizing: border-box;
  margin-right: 2px;
  border-radius: 3px;
  background: #3d3d3d;
  display: inline-flex;
}
.box.on { background: #5680c2; box-shadow: 0 0 0 1px #333; }
.box svg { width: 13px; height: 13px; }
.box path { fill: none; stroke: #fff; stroke-width: 1.5; }

.muted { background: rgba(88, 88, 88, .62); box-shadow: 0 0 0 1px rgba(30, 30, 30, .6), 1px 2px 4px rgba(0, 0, 0, .3); color: #333; }
.muted .head.geo { background: #3e5c53; color: #2a3f39; border-bottom-color: #2c2c2c; }
.muted .timer { background: rgba(100, 100, 100, .35); border-color: #4e4e4e; color: #444; }
.muted .dd-in { background: #444; color: #666; }
.muted .numbox { background: #636363; box-shadow: none; color: #404040; }

.crumbs {
  position: absolute;
  left: 24px;
  top: 19px;
  height: 18px;
  display: flex;
  align-items: center;
  font-size: 14.7px;
  color: #161616;
  white-space: nowrap;
}
.crumbs .c1 { margin-left: 9px; width: 257px; }
.crumbs .c2 { margin-left: 11px; width: 128px; }
.crumbs .c3 { margin-left: 10px; }
.sep { width: 7px; height: 7px; flex: none; border-top: 1.3px solid #161616; border-right: 1.3px solid #161616; transform: rotate(45deg); margin-right: 14px; box-sizing: border-box; }
</style>
